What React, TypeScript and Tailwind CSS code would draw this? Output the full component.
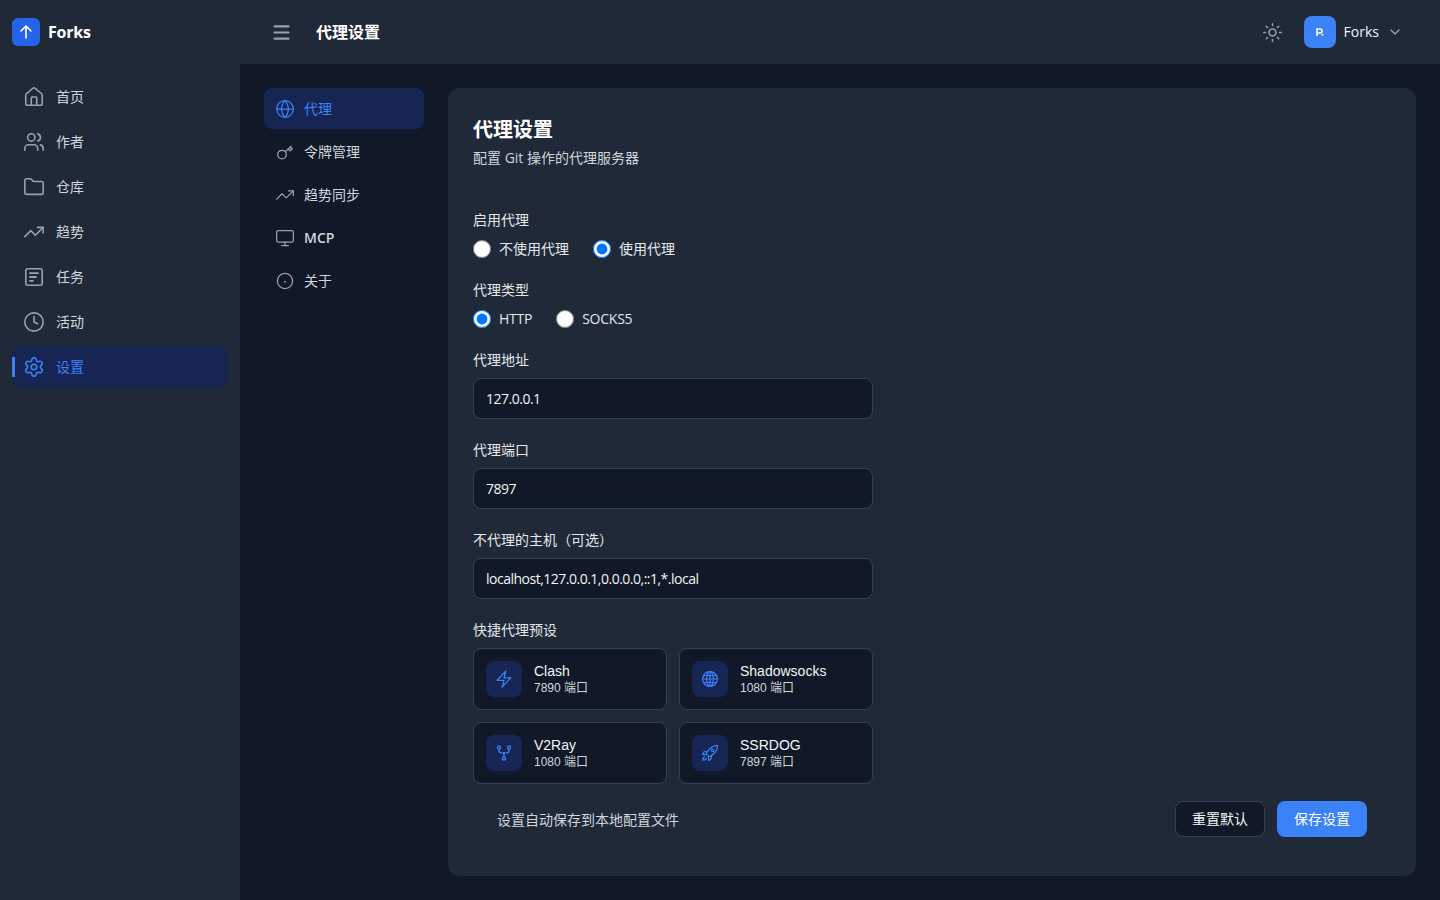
import React from "react";
import { House, Users, Folder, TrendingUp, Clock, Settings, Globe, Monitor, Sun, Menu, ChevronDown } from "lucide-react";
import { HiOutlineBolt } from "react-icons/hi2";

const font = "font-['Open_Sans','Noto_Sans_CJK_SC',sans-serif]";

const TaskIcon = () => (
  <svg viewBox="0 0 22 22" fill="none" stroke="currentColor" strokeWidth="1.6" strokeLinecap="round" className="w-[22px] h-[22px]">
    <rect x="2.8" y="2.8" width="16.4" height="16.4" rx="2" />
    <path d="M7 7.2h8M7 11h6M7 14.8h3" strokeWidth="1.8" />
  </svg>
);
const KeyIcon = () => (
  <svg viewBox="0 0 20 20" fill="none" stroke="currentColor" strokeWidth="1.3" className="w-5 h-5">
    <circle cx="7" cy="12.6" r="4.3" />
    <path d="M10.2 9.7 16.5 4M13.2 7l1.8 1.8 2.2-2-1.8-1.8" />
  </svg>
);
const AboutIcon = () => (
  <svg viewBox="0 0 20 20" fill="none" stroke="currentColor" strokeWidth="1.3" className="w-5 h-5">
    <circle cx="10" cy="10" r="7.6" />
    <path d="M10 10v1.6" strokeWidth="1.8" />
  </svg>
);
const ForkIcon = () => (
  <svg viewBox="0 0 18 18" fill="none" stroke="currentColor" strokeWidth="1.3" className="w-[18px] h-[18px]">
    <circle cx="4" cy="3.5" r="1.6" />
    <circle cx="14" cy="3.5" r="1.6" />
    <circle cx="9" cy="14.5" r="1.6" />
    <path d="M4 5.1v1.4c0 1.4 1 2.4 2.4 2.4h5.2c1.4 0 2.4-1 2.4-2.4V5.1M9 9v3.9" />
  </svg>
);
const GridGlobe = () => (
  <svg viewBox="0 0 18 18" fill="none" stroke="currentColor" strokeWidth="1.2" className="w-[18px] h-[18px]">
    <circle cx="9" cy="9" r="7.4" />
    <ellipse cx="9" cy="9" rx="3.4" ry="7.4" />
    <path d="M9 1.6v14.8M1.6 9h14.8M2.6 5.5h12.8M2.6 12.5h12.8" />
  </svg>
);
const RocketIcon = () => (
  <svg viewBox="0 0 18 18" fill="none" stroke="currentColor" strokeWidth="1.2" strokeLinejoin="round" strokeLinecap="round" className="w-[18px] h-[18px]">
    <path d="M16.6 1.4c-4.4.3-7.6 2.4-9.6 5.6L5.2 9.6l3.2 3.2 2.6-1.8c3.2-2 5.3-5.2 5.6-9.6Z" />
    <path d="M6.6 7.4 3 7.9 1.4 10.4l3.6.2M10.6 11.4l-.5 3.6-2.5 1.6-.2-3.6" />
    <circle cx="11.6" cy="6.4" r="1.2" />
    <path d="M3.6 12.6c-1 .6-1.6 1.6-1.8 3.6 2-.2 3-.8 3.6-1.8" />
  </svg>
);

const big = { size: 22, strokeWidth: 1.75 };
const small = { size: 20, strokeWidth: 1.5 };

const mainNav = [
  { label: "首页", icon: <House {...big} /> },
  { label: "作者", icon: <Users {...big} /> },
  { label: "仓库", icon: <Folder {...big} /> },
  { label: "趋势", icon: <TrendingUp {...big} /> },
  { label: "任务", icon: <TaskIcon /> },
  { label: "活动", icon: <Clock {...big} /> },
  { label: "设置", icon: <Settings {...big} />, active: true },
];

const subNav = [
  { label: "代理", icon: <Globe {...small} />, active: true },
  { label: "令牌管理", icon: <KeyIcon /> },
  { label: "趋势同步", icon: <TrendingUp {...small} /> },
  { label: "MCP", icon: <Monitor {...small} />, bold: true },
  { label: "关于", icon: <AboutIcon /> },
];

const presets = [
  { name: "Clash", port: "7890 端口", icon: <HiOutlineBolt className="w-5 h-5" /> },
  { name: "Shadowsocks", port: "1080 端口", icon: <GridGlobe /> },
  { name: "V2Ray", port: "1080 端口", icon: <ForkIcon /> },
  { name: "SSRDOG", port: "7897 端口", icon: <RocketIcon /> },
];

function Radio({ label, checked, latin }: { label: string; checked?: boolean; latin?: boolean }) {
  return (
    <label className="flex items-center gap-2">
      <input type="radio" readOnly checked={!!checked} className="w-[18px] h-[18px] m-0 accent-[#0075ff]" />
      <span className={`text-sm text-gray-200 ${latin ? "tracking-[-0.25px]" : ""}`}>{label}</span>
    </label>
  );
}

function Field({ label, value }: { label: string; value: string }) {
  return (
    <div className="pb-[21px]">
      <div className="text-sm leading-5 text-gray-200 mb-2">{label}</div>
      <div className="w-[400px] h-[41px] flex items-center px-3 rounded-lg border border-gray-700 bg-[#111827] text-sm tracking-[-0.5px] text-gray-100">{value}</div>
    </div>
  );
}

export default function App() {
  return (
    <div className={`${font} flex w-full h-[900px] overflow-hidden bg-[#111827]`}>
      <aside className="w-[240px] shrink-0 bg-[#1f2937] px-3">
        <div className="h-[64px] flex items-center gap-2">
          <div className="w-7 h-7 rounded-md bg-[#2563eb] flex items-center justify-center text-white">
            <svg viewBox="0 0 16 16" fill="none" stroke="currentColor" strokeWidth="1.6" strokeLinecap="round" strokeLinejoin="round" className="w-4 h-4"><path d="M8 14V2.5M3 7l5-5 5 5" /></svg>
          </div>
          <span className="text-base font-bold text-white tracking-[-0.2px]">Forks</span>
        </div>
        <nav className="mt-3 flex flex-col gap-[3px] w-[216px]">
          {mainNav.map((n) => (
            <div key={n.label} className={`relative h-[42px] flex items-center gap-[11px] pl-[11px] rounded-lg text-sm ${n.active ? "bg-[#172554] text-[#3b82f6]" : "text-gray-300"}`}>
              {n.active && <span className="absolute left-0 top-[11px] w-[3px] h-5 bg-[#3b82f6]" />}
              <span className={n.active ? "" : "text-gray-400"}>{n.icon}</span>
              <span>{n.label}</span>
            </div>
          ))}
        </nav>
      </aside>
      <div className="flex-1 min-w-0 flex flex-col">
        <header className="h-[64px] shrink-0 bg-[#1f2937] flex items-center pl-[31px] pr-[37px]">
          <Menu size={21} strokeWidth={2.4} className="text-gray-400" />
          <h1 className="ml-[24px] text-base font-bold text-white">代理设置</h1>
          <div className="ml-auto flex items-center">
            <Sun size={21} strokeWidth={1.75} className="text-gray-400" />
            <div className="ml-[21px] w-8 h-8 rounded-lg bg-[#3b82f6] flex items-center justify-center text-white">
              <svg viewBox="0 0 12 12" className="w-3 h-3" fill="none" stroke="currentColor" strokeWidth="1.6"><path d="M3 10V3h3a2 2 0 0 1 0 4H3" /><circle cx="8.5" cy="8.8" r="1" fill="currentColor" stroke="none" /></svg>
            </div>
            <span className="ml-2 text-sm text-gray-100">Forks</span>
            <ChevronDown size={16} strokeWidth={2} className="ml-2 text-gray-400" />
          </div>
        </header>
        <main className="flex-1 flex gap-6 p-6">
          <nav className="w-[160px] shrink-0 flex flex-col gap-[2px]">
            {subNav.map((n) => (
              <div key={n.label} className={`h-[41px] flex items-center gap-[9px] pl-[11px] rounded-lg text-sm ${n.active ? "bg-[#172554] text-[#3b82f6]" : "text-gray-300"} ${n.bold ? "font-semibold" : ""}`}>
                <span className={n.active ? "" : "text-gray-400"}>{n.icon}</span>
                <span>{n.label}</span>
              </div>
            ))}
          </nav>
          <section className="flex-1 min-w-0 rounded-xl bg-[#1f2937] pt-[28px] px-[25px]">
            <h2 className="text-xl leading-7 font-bold text-white">代理设置</h2>
            <p className="mt-[4px] text-sm leading-5 text-gray-300">配置 Git 操作的代理服务器</p>
            <div className="mt-[42px]">
              <div className="pb-5">
                <div className="text-sm leading-5 text-gray-200 mb-2">启用代理</div>
                <div className="h-[22px] flex items-center gap-6">
                  <Radio label="不使用代理" />
                  <Radio label="使用代理" checked />
                </div>
              </div>
              <div className="pb-5">
                <div className="text-sm leading-5 text-gray-200 mb-2">代理类型</div>
                <div className="h-[22px] flex items-center gap-6">
                  <Radio label="HTTP" checked latin />
                  <Radio label="SOCKS5" latin />
                </div>
              </div>
              <Field label="代理地址" value="127.0.0.1" />
              <Field label="代理端口" value="7897" />
              <Field label="不代理的主机（可选）" value="localhost,127.0.0.1,0.0.0.0,::1,*.local" />
              <div className="text-sm leading-5 text-gray-200 mb-2">快捷代理预设</div>
              <div className="w-[400px] grid grid-cols-2 gap-3">
                {presets.map((p) => (
                  <div key={p.name} className="h-[62px] flex items-center gap-3 px-3 rounded-lg border border-gray-700 bg-[#111827]">
                    <div className="w-9 h-9 rounded-lg bg-[#172554] flex items-center justify-center text-[#3b82f6]">{p.icon}</div>
                    <div>
                      <div className="font-['Liberation_Sans','Noto_Sans_CJK_SC',sans-serif] text-sm leading-[18px] text-gray-100">{p.name}</div>
                      <div className="font-['Liberation_Sans','Noto_Sans_CJK_SC',sans-serif] text-xs leading-4 text-gray-300">{p.port}</div>
                    </div>
                  </div>
                ))}
              </div>
              <div className="mt-[17px] flex items-center justify-between px-6">
                <span className="pt-0.5 text-sm text-gray-300">设置自动保存到本地配置文件</span>
                <div className="flex gap-3">
                  <div className="w-[90px] h-9 flex items-center justify-center rounded-lg border border-gray-700 bg-[#111827] text-sm text-gray-100">重置默认</div>
                  <div className="w-[90px] h-9 flex items-center justify-center rounded-lg bg-[#3b82f6] text-sm text-white">保存设置</div>
                </div>
              </div>
            </div>
          </section>
        </main>
      </div>
    </div>
  );
}
